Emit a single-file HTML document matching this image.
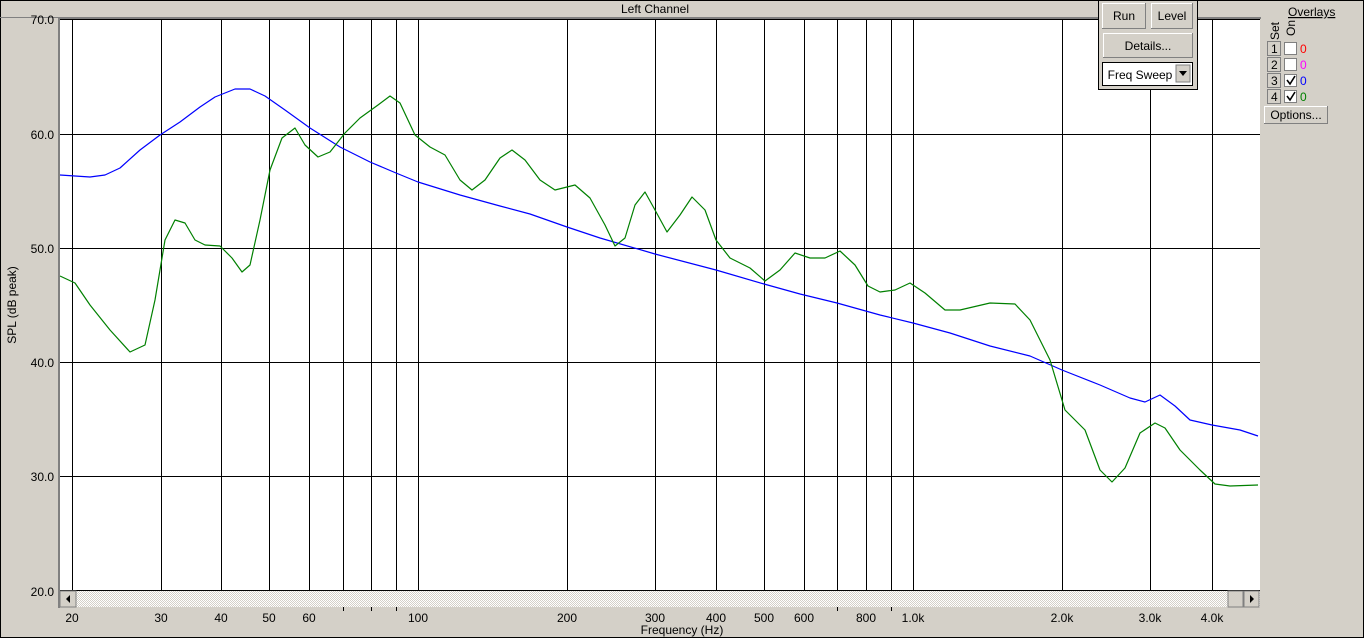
<!DOCTYPE html>
<html><head><meta charset="utf-8"><style>
html,body{margin:0;padding:0;background:#d4d0c8;}
svg{display:block;font-family:"Liberation Sans",sans-serif;}
</style></head><body>
<svg width="1364" height="638" viewBox="0 0 1364 638" xmlns="http://www.w3.org/2000/svg">
<rect x="0" y="0" width="1364" height="638" fill="#d4d0c8"/>
<rect x="0.5" y="0.5" width="1363" height="637" fill="none" stroke="#000"/>
<line x1="0" y1="17.5" x2="1262" y2="17.5" stroke="#808080"/>
<text x="655" y="13" font-size="12" text-anchor="middle" fill="#000">Left Channel</text>
<rect x="58" y="18" width="2" height="590" fill="#808080"/>
<rect x="58" y="18" width="1203" height="1" fill="#808080"/>
<rect x="60" y="19" width="1200" height="572" fill="#fff"/>
<g stroke="#000" stroke-width="1">
<line x1="60" y1="19.5" x2="1260" y2="19.5"/>
<line x1="60" y1="134.5" x2="1260" y2="134.5"/>
<line x1="60" y1="248.5" x2="1260" y2="248.5"/>
<line x1="60" y1="362.5" x2="1260" y2="362.5"/>
<line x1="60" y1="476.5" x2="1260" y2="476.5"/>
<line x1="60" y1="590.5" x2="1260" y2="590.5"/>
<line x1="72.5" y1="19" x2="72.5" y2="591"/><line x1="161.5" y1="19" x2="161.5" y2="591"/>
<line x1="221.5" y1="19" x2="221.5" y2="591"/><line x1="269.5" y1="19" x2="269.5" y2="591"/>
<line x1="309.5" y1="19" x2="309.5" y2="591"/><line x1="343.5" y1="19" x2="343.5" y2="591"/>
<line x1="371.5" y1="19" x2="371.5" y2="591"/><line x1="396.5" y1="19" x2="396.5" y2="591"/>
<line x1="418.5" y1="19" x2="418.5" y2="591"/><line x1="567.5" y1="19" x2="567.5" y2="591"/>
<line x1="655.5" y1="19" x2="655.5" y2="591"/><line x1="716.5" y1="19" x2="716.5" y2="591"/>
<line x1="764.5" y1="19" x2="764.5" y2="591"/><line x1="804.5" y1="19" x2="804.5" y2="591"/>
<line x1="837.5" y1="19" x2="837.5" y2="591"/><line x1="866.5" y1="19" x2="866.5" y2="591"/>
<line x1="891.5" y1="19" x2="891.5" y2="591"/><line x1="913.5" y1="19" x2="913.5" y2="591"/>
<line x1="1062.5" y1="19" x2="1062.5" y2="591"/><line x1="1150.5" y1="19" x2="1150.5" y2="591"/>
<line x1="1212.5" y1="19" x2="1212.5" y2="591"/>
</g>
<polyline fill="none" stroke="#0000ff" stroke-width="1.2" stroke-linejoin="round" points="60,175 90,177 105,175 120,168 140,150 160,135 180,122 200,107 215,97 235,89 250,89 265,96 285,110 310,128 340,147 370,162 396,173 418,182 460,195 500,206 530,214 567,227 600,238 655,254 716,270 764,284 800,294 837,303 880,315 913,323 950,333 990,346 1030,356 1062,370 1100,385 1130,398 1145,402 1160,395 1175,406 1190,420 1212,425 1240,430 1258,436"/>
<polyline fill="none" stroke="#008000" stroke-width="1.2" stroke-linejoin="round" points="60,276 75,283 90,305 110,330 130,352 145,345 155,300 165,240 175,220 185,223 195,240 205,245 220,246 232,258 242,272 250,265 260,220 270,170 282,138 295,128 305,145 318,157 330,152 345,133 360,118 378,105 390,96 400,103 415,135 430,147 445,155 460,180 472,190 485,180 500,158 512,150 525,160 540,180 555,190 575,185 590,198 605,225 615,246 625,238 635,205 645,192 655,210 667,232 680,215 692,197 705,210 716,240 730,258 750,268 765,281 780,270 795,253 810,258 825,258 840,251 855,265 868,286 880,292 895,290 910,283 925,293 945,310 960,310 990,303 1015,304 1030,320 1050,360 1065,410 1085,430 1100,470 1112,482 1125,468 1140,433 1155,423 1165,428 1180,450 1200,470 1215,484 1230,486 1258,485"/>
<defs><pattern id="ck" width="2" height="2" patternUnits="userSpaceOnUse"><rect width="2" height="2" fill="#fff"/><rect width="1" height="1" fill="#d4d0c8"/><rect x="1" y="1" width="1" height="1" fill="#d4d0c8"/></pattern></defs>
<rect x="60" y="591" width="1200" height="16" fill="url(#ck)"/>
<rect x="60" y="591" width="16" height="16" fill="#d4d0c8" stroke="#808080"/>
<path d="M70 595 L66 599 L70 603Z" fill="#000"/>
<rect x="1228" y="591" width="15" height="16" fill="#d4d0c8" stroke="#808080"/>
<rect x="1244" y="591" width="15" height="16" fill="#d4d0c8" stroke="#808080"/>
<path d="M1250 595 L1254 599 L1250 603Z" fill="#000"/>
<g font-size="12" fill="#000" text-anchor="end">
<text x="54" y="24">70.0</text><text x="54" y="139">60.0</text><text x="54" y="253">50.0</text>
<text x="54" y="367">40.0</text><text x="54" y="481">30.0</text><text x="54" y="596">20.0</text>
</g>
<g font-size="12" fill="#000" text-anchor="middle">
<text x="72" y="622">20</text><text x="161" y="622">30</text><text x="221" y="622">40</text>
<text x="269" y="622">50</text><text x="309" y="622">60</text><text x="418" y="622">100</text>
<text x="567" y="622">200</text><text x="655" y="622">300</text><text x="716" y="622">400</text>
<text x="764" y="622">500</text><text x="804" y="622">600</text><text x="866" y="622">800</text>
<text x="913" y="622">1.0k</text><text x="1062" y="622">2.0k</text><text x="1150" y="622">3.0k</text>
<text x="1212" y="622">4.0k</text>
<text x="682" y="634">Frequency (Hz)</text>
<text transform="translate(16,305) rotate(-90)">SPL (dB peak)</text>
</g>
<g stroke="#000"><line x1="343.5" y1="607" x2="343.5" y2="611"/><line x1="371.5" y1="607" x2="371.5" y2="611"/><line x1="396.5" y1="607" x2="396.5" y2="611"/><line x1="837.5" y1="607" x2="837.5" y2="611"/><line x1="891.5" y1="607" x2="891.5" y2="611"/></g>
<rect x="1261" y="1" width="102" height="636" fill="#d4d0c8"/>
<rect x="1098.5" y="0.5" width="99" height="89" fill="#d4d0c8" stroke="#000"/>
<g font-size="12" text-anchor="middle" fill="#000">
<rect x="1102.5" y="3.5" width="43" height="25" fill="#d4d0c8" stroke="#808080"/><path d="M1102.5 28 V3.5 H1145" stroke="#fff" fill="none"/>
<text x="1124" y="20">Run</text>
<rect x="1151.5" y="3.5" width="41" height="25" fill="#d4d0c8" stroke="#808080"/><path d="M1151.5 28 V3.5 H1192" stroke="#fff" fill="none"/>
<text x="1172" y="20">Level</text>
<rect x="1103.5" y="33.5" width="89" height="24" fill="#d4d0c8" stroke="#808080"/><path d="M1103.5 57 V33.5 H1192" stroke="#fff" fill="none"/>
<text x="1148" y="50">Details...</text>
<rect x="1102.5" y="62.5" width="90" height="23" fill="#fff" stroke="#000"/>
<text x="1140" y="79">Freq Sweep</text>
<rect x="1176" y="65" width="14" height="17" fill="#d4d0c8" stroke="#808080"/>
<path d="M1179 71 H1187 L1183 76Z" fill="#000"/>
</g>
<g font-size="12" fill="#000">
<text x="1288" y="16" text-decoration="underline">Overlays</text>
<text transform="translate(1279,40) rotate(-90)">Set</text>
<text transform="translate(1295,36) rotate(-90)">On</text>
</g>
<g font-size="12">
<rect x="1267.5" y="41.5" width="13" height="14" fill="#d4d0c8" stroke="#808080"/><text x="1271" y="53">1</text><rect x="1284.5" y="42.5" width="12" height="12" fill="#fff" stroke="#808080"/><text x="1300" y="53" fill="#ff0000">0</text>
<rect x="1267.5" y="57.5" width="13" height="14" fill="#d4d0c8" stroke="#808080"/><text x="1271" y="69">2</text><rect x="1284.5" y="58.5" width="12" height="12" fill="#fff" stroke="#808080"/><text x="1300" y="69" fill="#ff00ff">0</text>
<rect x="1267.5" y="73.5" width="13" height="14" fill="#d4d0c8" stroke="#808080"/><text x="1271" y="85">3</text><rect x="1284.5" y="74.5" width="12" height="12" fill="#fff" stroke="#808080"/><path d="M1287 80 L1290 84 L1295 76" stroke="#000" stroke-width="1.6" fill="none"/><text x="1300" y="85" fill="#0000ff">0</text>
<rect x="1267.5" y="89.5" width="13" height="14" fill="#d4d0c8" stroke="#808080"/><text x="1271" y="101">4</text><rect x="1284.5" y="90.5" width="12" height="12" fill="#fff" stroke="#808080"/><path d="M1287 96 L1290 100 L1295 92" stroke="#000" stroke-width="1.6" fill="none"/><text x="1300" y="101" fill="#008000">0</text>
<rect x="1264.5" y="106.5" width="63" height="17" fill="#d4d0c8" stroke="#808080"/><path d="M1264.5 123 V106.5 H1327" stroke="#fff" fill="none"/>
<text x="1296" y="119" text-anchor="middle">Options...</text>
</g>
</svg>
</body></html>
